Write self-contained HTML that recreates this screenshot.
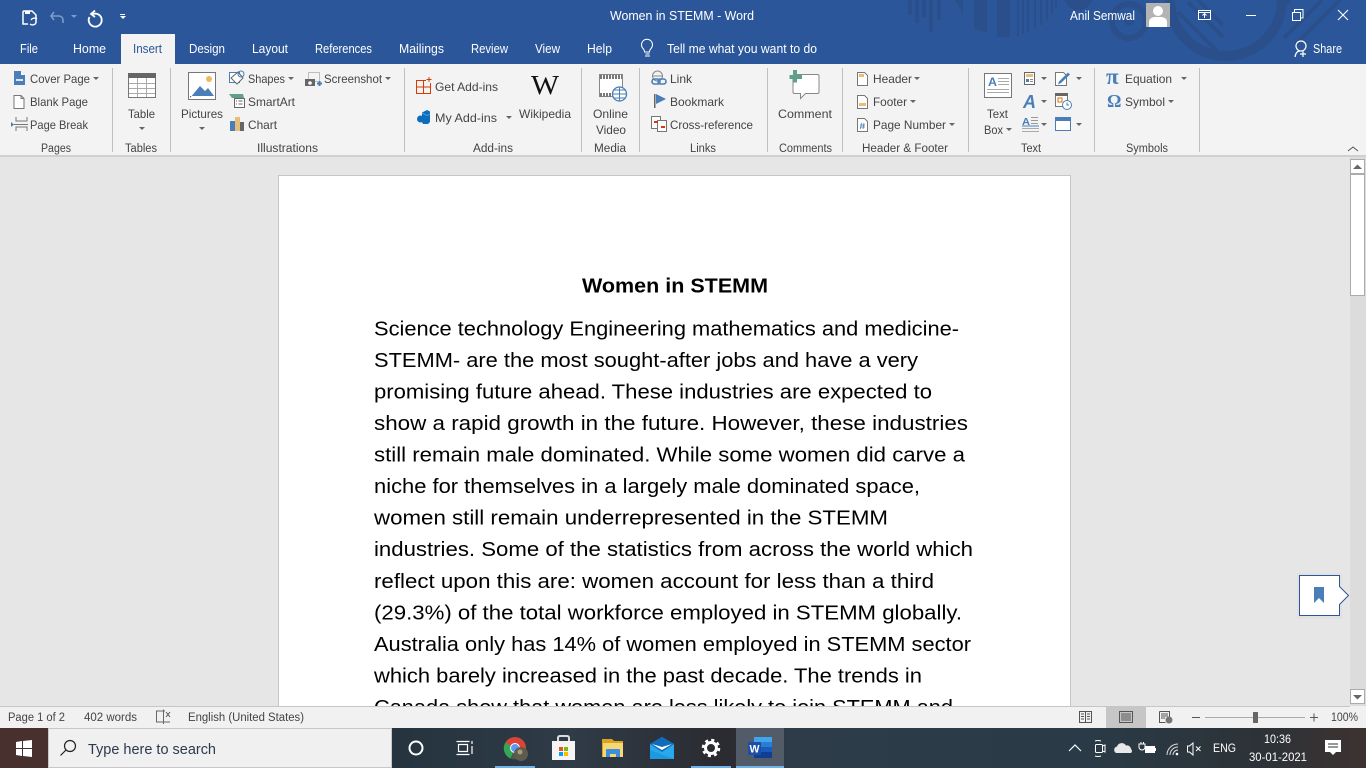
<!DOCTYPE html>
<html><head><meta charset="utf-8"><title>Women in STEMM - Word</title>
<style>
html,body{margin:0;padding:0;width:1366px;height:768px;overflow:hidden;background:#e6e6e6}
svg{display:block;position:absolute;left:0;top:0}
text{font-family:"Liberation Sans",sans-serif;font-size:12px;fill:#444}
.t{fill:#fff;font-size:12.5px}
.g{font-size:11.5px;fill:#444}
.s{font-size:11.5px;fill:#444}
.d{font-size:20px;fill:#000}
.tr{fill:#666}
</style></head><body>
<svg width="1366" height="768" viewBox="0 0 1366 768" xmlns="http://www.w3.org/2000/svg">
<defs><linearGradient id="tb" x1="0" x2="1" y1="0" y2="0">
<stop offset="0" stop-color="#4a2d2c"/><stop offset=".035" stop-color="#452e2e"/><stop offset=".29" stop-color="#25343f"/><stop offset=".42" stop-color="#2f3b47"/><stop offset=".53" stop-color="#2b2b30"/><stop offset=".58" stop-color="#2e3c4a"/><stop offset=".8" stop-color="#2a3a46"/><stop offset=".92" stop-color="#2c3338"/><stop offset="1" stop-color="#3d3230"/></linearGradient></defs>

<!-- title bar -->
<rect width="1366" height="64" fill="#2b579a"/>
<g fill="#2a4f8a">
<rect x="908" y="0" width="4" height="15"/><rect x="915" y="0" width="4" height="23"/><rect x="922" y="0" width="4" height="17"/><rect x="929" y="0" width="4" height="32"/><rect x="937" y="0" width="4" height="20"/>
<path d="M955 0h8v14zM974 0h13v33l-13-5zM997 0h13v37h-13zM1017 0h2v36h-2zM1022 0h2v34h-2zM1027 0h2v32h-2zM1034 0h2v29h-2zM1040 0h2v25h-2zM1046 0h2v20h-2zM1051 0h2v14h-2zM1055 0h2v9h-2z"/>
<path d="M1065 0h27a14 14 0 0 1-27 0z"/>
</g>
<circle cx="1129" cy="21" r="17" fill="none" stroke="#2a4f8a" stroke-width="6"/>
<circle cx="1129" cy="21" r="5" fill="#2a4f8a"/>
<circle cx="1226" cy="0" r="56" fill="none" stroke="#2a4f8a" stroke-width="10"/>
<path d="M1178 12l40 40M1188 2l35 35M1198 0l25 25M1290 0l-8 8M1322 0l-38 38M1340 0l-45 45" stroke="#2a4f8a" stroke-width="4" fill="none"/>

<!-- QAT -->
<g fill="none" stroke="#fff" stroke-width="1.5">
<path d="M23 11h9l4 4v8M23 11v13h5"/><path d="M31 20a4 4 0 0 1 6-1M36 23a4 4 0 0 1-6 1" stroke-width="1.3"/>
</g>
<rect x="25" y="11" width="5" height="3" fill="#fff"/>
<path d="M54 12l-3 4 3 4M51 16h8a4 4 0 0 1 4 4v3" fill="none" stroke="#7f9cc8" stroke-width="1.6"/>
<path d="M71 15h6l-3 3z" fill="#7f9cc8"/>
<path d="M95 10.500l-4 3.500 4 3M91 14h2a6.500 6.500 0 1 1-3.500 3" fill="none" stroke="#fff" stroke-width="1.8"/>
<path d="M120 14h5v1h-5zM120 16h6l-3 3z" fill="#fff"/>

<text class="t" x="610" y="20" textLength="144" lengthAdjust="spacingAndGlyphs">Women in STEMM  -  Word</text>
<text class="t" x="1070" y="20" textLength="65" lengthAdjust="spacingAndGlyphs">Anil Semwal</text>
<rect x="1146" y="3" width="24" height="24" fill="#b3b3b3"/>
<circle cx="1158" cy="11" r="5" fill="#fff"/><path d="M1149 27v-5q0-4 5-5h8q5 1 5 5v5z" fill="#fff"/>

<!-- window controls -->
<g fill="none" stroke="#fff" stroke-width="1">
<rect x="1198.500" y="10.500" width="12" height="9"/><path d="M1198 12.500h13M1204.500 18v-4M1202.500 15.500l2-2 2 2"/>
<path d="M1246 15.500h10"/>
<rect x="1292.500" y="12.500" width="8" height="8"/><path d="M1294.500 12v-2.500h8.500v8.500h-2.500"/>
<path d="M1338 10l10 10M1348 10l-10 10" stroke-width="1.1"/>
</g>

<!-- tabs -->
<rect x="121" y="34" width="54" height="31" fill="#f3f3f3"/>
<text class="t" x="20" y="53" textLength="18" lengthAdjust="spacingAndGlyphs">File</text>
<text class="t" x="73" y="53" textLength="33" lengthAdjust="spacingAndGlyphs">Home</text>
<text class="t" x="133" y="53" textLength="29" lengthAdjust="spacingAndGlyphs" style="fill:#2b579a">Insert</text>
<text class="t" x="189" y="53" textLength="36" lengthAdjust="spacingAndGlyphs">Design</text>
<text class="t" x="252" y="53" textLength="36" lengthAdjust="spacingAndGlyphs">Layout</text>
<text class="t" x="315" y="53" textLength="57" lengthAdjust="spacingAndGlyphs">References</text>
<text class="t" x="399" y="53" textLength="45" lengthAdjust="spacingAndGlyphs">Mailings</text>
<text class="t" x="471" y="53" textLength="37" lengthAdjust="spacingAndGlyphs">Review</text>
<text class="t" x="535" y="53" textLength="25" lengthAdjust="spacingAndGlyphs">View</text>
<text class="t" x="587" y="53" textLength="25" lengthAdjust="spacingAndGlyphs">Help</text>
<path d="M645 56h5M645.500 54h4M644.500 52q0-2-1.500-3.500a5.500 5.500 0 1 1 8 0q-1.500 1.500-1.500 3.500z" fill="none" stroke="#fff" stroke-width="1"/>
<text class="t" x="667" y="53" textLength="150" lengthAdjust="spacingAndGlyphs">Tell me what you want to do</text>
<circle cx="1301" cy="46" r="5" fill="none" stroke="#fff" stroke-width="1.2"/>
<path d="M1295 57q1-6 5-6M1303 51v6M1300 54h6" fill="none" stroke="#fff" stroke-width="1.2"/>
<text class="t" x="1313" y="53" textLength="29" lengthAdjust="spacingAndGlyphs">Share</text>

<!-- ribbon -->
<rect y="64" width="1366" height="92" fill="#f3f3f3"/>
<rect y="155" width="1366" height="2" fill="#d0d0d0"/>
<g fill="#c0c0c0">
<rect x="112" y="68" width="1" height="84"/><rect x="170" y="68" width="1" height="84"/><rect x="404" y="68" width="1" height="84"/><rect x="581" y="68" width="1" height="84"/><rect x="639" y="68" width="1" height="84"/><rect x="767" y="68" width="1" height="84"/><rect x="842" y="68" width="1" height="84"/><rect x="968" y="68" width="1" height="84"/><rect x="1094" y="68" width="1" height="84"/><rect x="1199" y="68" width="1" height="84"/>
</g>

<!-- Pages -->
<path d="M14 71h7l4 4v10H14z" fill="#4a7eb8"/><path d="M21 71v4h4z" fill="#fff"/><path d="M16 79h7v2h-7z" fill="#dce6f2"/>
<path d="M14 95.500h7l3 3v10h-10z" fill="#fff" stroke="#777"/><path d="M21 95.500v3h3" fill="none" stroke="#777"/>
<path d="M16 117v4h11v-4M16 131v-4h11v4" fill="none" stroke="#777"/><path d="M11 122v5l3-2.500z" fill="#4a7eb8"/><path d="M14 124.500h14" stroke="#777"/>
<text x="30" y="83" textLength="60" lengthAdjust="spacingAndGlyphs">Cover Page</text>
<path class="tr" d="M93 77h6l-3 3z"/>
<text x="30" y="106" textLength="58" lengthAdjust="spacingAndGlyphs">Blank Page</text>
<text x="30" y="129" textLength="58" lengthAdjust="spacingAndGlyphs">Page Break</text>
<text class="g" x="41" y="152" textLength="30" lengthAdjust="spacingAndGlyphs">Pages</text>

<!-- Tables -->
<rect x="128.500" y="73.500" width="27" height="24" fill="#fff" stroke="#777"/><rect x="128" y="73" width="28" height="5" fill="#666"/>
<path d="M129 83.500h26M129 88.500h26M129 93.500h26M137.500 78v19M146.500 78v19" stroke="#aaa" fill="none"/>
<text x="128" y="118" textLength="27" lengthAdjust="spacingAndGlyphs">Table</text>
<path class="tr" d="M139 127h6l-3 3z"/>
<text class="g" x="125" y="152" textLength="32" lengthAdjust="spacingAndGlyphs">Tables</text>

<!-- Illustrations -->
<rect x="188.500" y="72.500" width="27" height="27" fill="#fff" stroke="#777"/><circle cx="209" cy="79" r="3" fill="#f0b95c"/>
<path d="M190 98l10-12 5 5 3-3 6 8v0h-24z" fill="#4a7eb8"/>
<text x="181" y="118" textLength="42" lengthAdjust="spacingAndGlyphs">Pictures</text>
<path class="tr" d="M199 127h6l-3 3z"/>
<rect x="229.500" y="72.500" width="10" height="10" fill="#fff" stroke="#4a7eb8"/><path d="M238 72l5 6-6 6-6-6z" fill="#fff" stroke="#666"/><circle cx="241" cy="74" r="3" fill="none" stroke="#4a7eb8"/>
<text x="248" y="83" textLength="37" lengthAdjust="spacingAndGlyphs">Shapes</text><path class="tr" d="M288 77h6l-3 3z"/>
<path d="M229 94h14l1 4H232z" fill="#5fa08a"/><rect x="234.500" y="98.500" width="10" height="9" fill="#fff" stroke="#666"/><path d="M236 101h1M238.500 101h4M236 104h1M238.500 104h4" stroke="#666"/>
<text x="248" y="106" textLength="47" lengthAdjust="spacingAndGlyphs">SmartArt</text>
<rect x="230" y="121" width="5" height="10" fill="#4a7eb8"/><rect x="235" y="117" width="5" height="14" fill="#e5bf7a"/><rect x="240" y="122" width="4" height="9" fill="#666"/>
<text x="248" y="129" textLength="29" lengthAdjust="spacingAndGlyphs">Chart</text>
<rect x="308.500" y="72.500" width="11" height="9" fill="none" stroke="#888" stroke-dasharray="1 1"/><rect x="305" y="79" width="10" height="7" fill="#666"/><circle cx="310" cy="83" r="1.800" fill="#fff"/><path d="M317 83.500h5M319.500 81v5" stroke="#4a7eb8" stroke-width="2"/>
<text x="324" y="83" textLength="58" lengthAdjust="spacingAndGlyphs">Screenshot</text><path class="tr" d="M385 77h6l-3 3z"/>
<text class="g" x="257" y="152" textLength="61" lengthAdjust="spacingAndGlyphs">Illustrations</text>

<!-- Add-ins -->
<path d="M416.500 80.500h14v13h-14zM416.500 87h14M423.500 80v13" fill="none" stroke="#d83b01" stroke-width="1"/>
<rect x="426" y="76" width="6" height="7" fill="#f3f3f3"/><path d="M426.500 79.500h5M429 77v5" stroke="#d83b01"/>
<text x="435" y="91" textLength="63" lengthAdjust="spacingAndGlyphs">Get Add-ins</text>
<path d="M422 112.500l5-2.500 3 1.500v10.500l-2 2h-5l-1-2v-7z" fill="#0f6cbd"/><circle cx="420.500" cy="119" r="3.500" fill="#0f6cbd"/>
<path d="M422 113l5 2.500 3-1.500" fill="none" stroke="#5aa7e6" stroke-width=".7"/>
<text x="435" y="122" textLength="62" lengthAdjust="spacingAndGlyphs">My Add-ins</text>
<path class="tr" d="M506 116h6l-3 3z"/>
<text x="531" y="94" textLength="28" lengthAdjust="spacingAndGlyphs" style="font-family:'Liberation Serif',serif;font-size:27px;fill:#111">W</text>
<text x="519" y="118" textLength="52" lengthAdjust="spacingAndGlyphs">Wikipedia</text>
<text class="g" x="473" y="152" textLength="40" lengthAdjust="spacingAndGlyphs">Add-ins</text>

<!-- Media -->
<rect x="599.500" y="74.500" width="23" height="22" fill="#fff" stroke="#888"/>
<path d="M600 77h22M600 95h14" stroke="#777" stroke-width="4" stroke-dasharray="2 1"/>
<circle cx="619.500" cy="94" r="7" fill="#fff" stroke="#4a7eb8" stroke-width="1.300"/><path d="M612.500 94h14M619.500 87v14M614 90h11M614 98h11" stroke="#4a7eb8" fill="none"/>
<text x="593" y="118" textLength="35" lengthAdjust="spacingAndGlyphs">Online</text>
<text x="596" y="134" textLength="30" lengthAdjust="spacingAndGlyphs">Video</text>
<text class="g" x="594" y="152" textLength="32" lengthAdjust="spacingAndGlyphs">Media</text>

<!-- Links -->
<circle cx="657.500" cy="76" r="5" fill="none" stroke="#888"/><path d="M652 76h11" stroke="#888"/>
<rect x="652" y="79" width="8" height="5" rx="2.500" fill="none" stroke="#4a7eb8" stroke-width="1.600"/><rect x="658" y="79" width="8" height="5" rx="2.500" fill="none" stroke="#4a7eb8" stroke-width="1.600"/>
<text x="670" y="83" textLength="22" lengthAdjust="spacingAndGlyphs">Link</text>
<rect x="654" y="94" width="1.500" height="14" fill="#666"/><path d="M656 94l10 5-10 5z" fill="#4a7eb8"/>
<text x="670" y="106" textLength="54" lengthAdjust="spacingAndGlyphs">Bookmark</text>
<rect x="651.500" y="116.500" width="9" height="12" fill="#fff" stroke="#777"/><rect x="657.500" y="120.500" width="9" height="11" fill="#fff" stroke="#777"/><path d="M654 122h4M661 127h4" stroke="#d83b01" stroke-width="2"/>
<text x="670" y="129" textLength="83" lengthAdjust="spacingAndGlyphs">Cross-reference</text>
<text class="g" x="690" y="152" textLength="26" lengthAdjust="spacingAndGlyphs">Links</text>

<!-- Comments -->
<path d="M793.500 74.500h24a1.500 1.500 0 0 1 1.500 1.500v16a1.500 1.500 0 0 1-1.500 1.500h-12l-5 5v-5h-6a1.500 1.500 0 0 1-1.500-1.500v-16z" fill="#fff" stroke="#888"/>
<path d="M792 70h4v5h5v4h-5v3.500h-4V79h-3.500v-4H792z" fill="#5fa08a" transform="translate(1 0)"/>
<text x="778" y="118" textLength="54" lengthAdjust="spacingAndGlyphs">Comment</text>
<text class="g" x="779" y="152" textLength="53" lengthAdjust="spacingAndGlyphs">Comments</text>

<!-- Header & Footer -->
<path d="M857.500 72.500h7l3 3v10h-10z" fill="#fff" stroke="#777"/><rect x="859" y="74" width="5" height="3" fill="#e5bf7a"/>
<text x="873" y="83" textLength="39" lengthAdjust="spacingAndGlyphs">Header</text><path class="tr" d="M914 77h6l-3 3z"/>
<path d="M857.500 95.500h7l3 3v10h-10z" fill="#fff" stroke="#777"/><rect x="859" y="103" width="7" height="3" fill="#e5bf7a"/>
<text x="873" y="106" textLength="34" lengthAdjust="spacingAndGlyphs">Footer</text><path class="tr" d="M910 100h6l-3 3z"/>
<path d="M857.500 118.500h7l3 3v10h-10z" fill="#fff" stroke="#777"/>
<path d="M860 125h5M860 127h5M861.500 123l-1 6M864 123l-1 6" stroke="#4a7eb8" stroke-width=".8" fill="none"/>
<text x="873" y="129" textLength="73" lengthAdjust="spacingAndGlyphs">Page Number</text><path class="tr" d="M949 123h6l-3 3z"/>
<text class="g" x="862" y="152" textLength="86" lengthAdjust="spacingAndGlyphs">Header &amp; Footer</text>

<!-- Text -->
<rect x="984.500" y="73.500" width="27" height="24" fill="#fff" stroke="#777"/>
<text x="988" y="86" textLength="9" lengthAdjust="spacingAndGlyphs" style="font-size:12px;font-weight:bold;fill:#4a7eb8">A</text>
<path d="M998 78.500h11M998 81.500h11M998 84.500h11M987 89.500h22M987 92.500h22" stroke="#aaa" fill="none"/>
<text x="987" y="118" textLength="21" lengthAdjust="spacingAndGlyphs">Text</text>
<text x="984" y="134" textLength="19" lengthAdjust="spacingAndGlyphs">Box</text><path class="tr" d="M1006 128h6l-3 3z"/>
<rect x="1024.500" y="72.500" width="10" height="12" fill="#fff" stroke="#666"/><rect x="1026" y="74" width="7" height="3" fill="#e5bf7a"/><path d="M1026 79h3v3h-3z" fill="#4a7eb8"/><path d="M1030 79.500h3M1030 81.500h3" stroke="#888"/>
<path class="tr" d="M1041 77h6l-3 3z"/>
<path d="M1055.500 72.500h8l3 3v10h-11z" fill="#fff" stroke="#777"/><path d="M1061 83l-3 1.500 1-3 9-9 2 2z" fill="#4a7eb8"/>
<path class="tr" d="M1076 77h6l-3 3z"/>
<text x="1023" y="108" textLength="13" lengthAdjust="spacingAndGlyphs" style="font-size:18px;font-weight:bold;font-style:italic;fill:#4a7eb8">A</text>
<path class="tr" d="M1041 100h6l-3 3z"/>
<rect x="1055.500" y="94.500" width="12" height="12" fill="#fff" stroke="#777"/><rect x="1055" y="93" width="13" height="3" fill="#666"/><rect x="1058" y="98" width="4" height="4" fill="none" stroke="#d9730d"/>
<circle cx="1067" cy="105" r="4.500" fill="#fff" stroke="#4a7eb8"/><path d="M1067 102.500v2.500h2" stroke="#4a7eb8" fill="none"/>
<text x="1022" y="125" textLength="8" lengthAdjust="spacingAndGlyphs" style="font-size:10.500px;font-weight:bold;fill:#4a7eb8">A</text>
<path d="M1031 117.500h7M1031 120.500h7M1031 123.500h7" stroke="#999" fill="none"/><path d="M1022 126h17" stroke="#4a7eb8"/><path d="M1022 128.500h17M1022 131.500h17" stroke="#aaa"/>
<path class="tr" d="M1041 123h6l-3 3z"/>
<rect x="1055.500" y="117.500" width="15" height="13" fill="#fff" stroke="#4a7eb8"/><rect x="1055" y="117" width="16" height="4" fill="#4a7eb8"/>
<path class="tr" d="M1076 123h6l-3 3z"/>
<text class="g" x="1021" y="152" textLength="20" lengthAdjust="spacingAndGlyphs">Text</text>

<!-- Symbols -->
<text x="1106" y="84" style="font-family:'Liberation Serif',serif;font-size:23px;font-weight:bold;fill:#4a7eb8">π</text>
<text x="1125" y="83" textLength="47" lengthAdjust="spacingAndGlyphs">Equation</text><path class="tr" d="M1181 77h6l-3 3z"/>
<text x="1107" y="107" style="font-family:'Liberation Serif',serif;font-size:18px;font-weight:bold;fill:#4a7eb8">Ω</text>
<text x="1125" y="106" textLength="40" lengthAdjust="spacingAndGlyphs">Symbol</text><path class="tr" d="M1168 100h6l-3 3z"/>
<text class="g" x="1126" y="152" textLength="42" lengthAdjust="spacingAndGlyphs">Symbols</text>
<path d="M1348 151l5-4 5 4" fill="none" stroke="#555"/>

<!-- document area -->
<rect x="0" y="157" width="1350" height="550" fill="#e6e6e6"/>
<rect x="278.500" y="175.500" width="792" height="540" fill="#fff" stroke="#c6c6c6"/>
<text x="582" y="292.500" textLength="186" lengthAdjust="spacingAndGlyphs" style="font-size:20px;font-weight:bold;fill:#000">Women in STEMM</text>
<text class="d" x="374" y="335.500" textLength="585" lengthAdjust="spacingAndGlyphs">Science technology Engineering mathematics and medicine-</text>
<text class="d" x="374" y="367" textLength="544" lengthAdjust="spacingAndGlyphs">STEMM- are the most sought-after jobs and have a very</text>
<text class="d" x="374" y="398.500" textLength="558" lengthAdjust="spacingAndGlyphs">promising future ahead. These industries are expected to</text>
<text class="d" x="374" y="430" textLength="594" lengthAdjust="spacingAndGlyphs">show a rapid growth in the future. However, these industries</text>
<text class="d" x="374" y="461.500" textLength="591" lengthAdjust="spacingAndGlyphs">still remain male dominated. While some women did carve a</text>
<text class="d" x="374" y="493" textLength="546" lengthAdjust="spacingAndGlyphs">niche for themselves in a largely male dominated space,</text>
<text class="d" x="374" y="524.500" textLength="514" lengthAdjust="spacingAndGlyphs">women still remain underrepresented in the STEMM</text>
<text class="d" x="374" y="556" textLength="599" lengthAdjust="spacingAndGlyphs">industries. Some of the statistics from across the world which</text>
<text class="d" x="374" y="588" textLength="560" lengthAdjust="spacingAndGlyphs">reflect upon this are: women account for less than a third</text>
<text class="d" x="374" y="619.500" textLength="588" lengthAdjust="spacingAndGlyphs">(29.3%) of the total workforce employed in STEMM globally.</text>
<text class="d" x="374" y="651" textLength="597" lengthAdjust="spacingAndGlyphs">Australia only has 14% of women employed in STEMM sector</text>
<text class="d" x="374" y="682.500" textLength="548" lengthAdjust="spacingAndGlyphs">which barely increased in the past decade. The trends in</text>
<text class="d" x="374" y="714" textLength="579" lengthAdjust="spacingAndGlyphs">Canada show that women are less likely to join STEMM and</text>

<!-- scrollbar -->
<rect x="1350" y="157" width="16" height="550" fill="#dcdcdc"/>
<rect x="1350.500" y="159.500" width="14" height="14" fill="#fff" stroke="#ababab"/><path d="M1353 169h9l-4.500-4.500z" fill="#666"/>
<rect x="1350.500" y="174.500" width="14" height="121" fill="#fff" stroke="#ababab"/>
<rect x="1350.500" y="689.500" width="14" height="14" fill="#fff" stroke="#ababab"/><path d="M1353 695h9l-4.500 4.500z" fill="#666"/>

<!-- bookmark callout -->
<rect x="1297" y="573" width="45" height="46" fill="#dedede" opacity=".6"/>
<path d="M1299.500 575.500h40v11l9 9-9 9v11h-40z" fill="#fff" stroke="#2b579a"/>
<path d="M1314 587h10v16l-5-5-5 5z" fill="#4a7eb8"/>

<!-- status bar -->
<rect y="706" width="1366" height="22" fill="#f1f1f1"/><rect y="706" width="1350" height="1" fill="#c6c6c6"/>
<text class="s" x="8" y="721" textLength="57" lengthAdjust="spacingAndGlyphs">Page 1 of 2</text>
<text class="s" x="84" y="721" textLength="53" lengthAdjust="spacingAndGlyphs">402 words</text>
<path d="M163 711h-6.500v11h6.500M163.500 709.500v14.500M164 711h1M164 722h6" fill="none" stroke="#666"/><path d="M166 712l4 5M170 712l-4 5" stroke="#555"/>
<text class="s" x="188" y="721" textLength="116" lengthAdjust="spacingAndGlyphs">English (United States)</text>
<rect x="1106" y="707" width="40" height="21" fill="#c6c6c6"/>
<path d="M1079.500 711.500h5.500l.5 .5.5-.5h5.500v11h-12zM1085.500 712v10M1081 714h3M1081 716.500h3M1081 719h3M1087 714h3M1087 716.500h3M1087 719h3" fill="none" stroke="#555"/>
<rect x="1119.500" y="711.500" width="13" height="11" fill="none" stroke="#555"/><path d="M1121 714h10M1121 716h10M1121 718h10M1121 720h10" stroke="#555"/>
<path d="M1159.500 711.500h10v7M1159.500 711.500v11h6M1161 714h7M1161 716h7M1161 718h4" fill="none" stroke="#555"/><circle cx="1169" cy="720" r="3.500" fill="#777"/>
<rect x="1192" y="717" width="8" height="1" fill="#555"/>
<rect x="1205" y="717" width="100" height="1" fill="#aaa"/><rect x="1253" y="712" width="5" height="11" fill="#666"/>
<path d="M1310 717.500h8M1314 713.500v8" stroke="#555" fill="none"/>
<text class="s" x="1331" y="721" textLength="27" lengthAdjust="spacingAndGlyphs">100%</text>

<!-- taskbar -->
<rect y="728" width="1366" height="40" fill="url(#tb)"/>
<rect x="0" y="728" width="48" height="40" fill="#47302e"/>
<path d="M16 742l6-1v7h-6zM23 741l9-1v8h-9zM16 749h6v7l-6-1zM23 749h9v8l-9-1z" fill="#fff"/>
<rect x="48.500" y="728.500" width="343" height="39" fill="#f0f0f0" stroke="#c8c8c8"/>
<circle cx="70" cy="746" r="5.500" fill="none" stroke="#222" stroke-width="1.200"/><path d="M66 750l-5.500 5.500" stroke="#222" stroke-width="1.200"/>
<text x="88" y="754" textLength="128" lengthAdjust="spacingAndGlyphs" style="font-size:14.500px;fill:#2c3a4e">Type here to search</text>
<circle cx="416" cy="748" r="6.500" fill="none" stroke="#fff" stroke-width="2"/>
<path d="M456.500 741.500h13M458.500 744.500h9v7h-9zM456.500 754.500h13M472 741v3M472 746v8" fill="none" stroke="#fff" stroke-width="1.200"/>
<!-- Chrome -->
<circle cx="515" cy="748" r="11" fill="#db4437"/>
<path d="M515 748l-9.500-5.500a11 11 0 0 0 5 16z" fill="#31a853"/><path d="M515 748l-4.500 10.500a11 11 0 0 0 14-5z" fill="#4a5a50"/>
<circle cx="515" cy="748" r="4.500" fill="#5e97f6" stroke="#fff"/>
<circle cx="521" cy="754" r="7" fill="#5e5c4c"/><circle cx="520" cy="752" r="2.500" fill="#a89c7c"/>
<rect x="495" y="766" width="40" height="2" fill="#6fb2e8"/>
<!-- Store -->
<path d="M558 742v-4q0-2 2-2h7q2 0 2 2v4" fill="none" stroke="#ddd" stroke-width="2"/>
<rect x="552" y="741" width="23" height="19" fill="#f4f4f4"/>
<rect x="559" y="747" width="4" height="4" fill="#f25022"/><rect x="564" y="747" width="4" height="4" fill="#7fba00"/><rect x="559" y="752" width="4" height="4" fill="#00a4ef"/><rect x="564" y="752" width="4" height="4" fill="#ffb900"/>
<!-- Explorer -->
<path d="M602 739h10l2 2h9v16h-21z" fill="#d9a520"/><rect x="603" y="743" width="20" height="14" fill="#f7d774"/>
<path d="M606 757v-7a1 1 0 0 1 1-1h12a1 1 0 0 1 1 1v7h-4v-3h-6v3z" fill="#3f8edb"/>
<!-- Mail -->
<path d="M650 744l12-7 12 7v15h-24z" fill="#29a8ea"/><path d="M650 744l12-7 12 7-12 8z" fill="#0f6cbd"/><path d="M652 744l10 6 10-6-10 3z" fill="#fff"/><path d="M650 750l24 9h-24z" fill="#1b9ae0"/>
<!-- Settings -->
<circle cx="711" cy="748" r="5.500" fill="none" stroke="#fff" stroke-width="3"/>
<circle cx="711" cy="748" r="8" fill="none" stroke="#fff" stroke-width="2.500" stroke-dasharray="3.100 3.180"/>
<rect x="691" y="766" width="40" height="2" fill="#6fb2e8"/>
<!-- Word -->
<rect x="736" y="728" width="48" height="40" fill="#515c68"/>
<rect x="736" y="766" width="48" height="2" fill="#6fb2e8"/>
<rect x="754" y="737" width="18" height="21" rx="1" fill="#185abd"/><rect x="754" y="737" width="18" height="5" fill="#41a5ee"/><rect x="754" y="742" width="18" height="5" fill="#2b7cd3"/><rect x="754" y="752" width="18" height="6" fill="#103f91"/>
<rect x="748" y="742" width="13" height="13" rx="1" fill="#1b4fa5"/>
<text x="749.500" y="752.500" textLength="10" lengthAdjust="spacingAndGlyphs" style="font-size:11px;font-weight:bold;fill:#fff">W</text>

<!-- tray -->
<path d="M1069 751l6-6 6 6" fill="none" stroke="#fff" stroke-width="1.200"/>
<rect x="1095.500" y="744.500" width="7" height="8" rx="1" fill="none" stroke="#fff"/><path d="M1102.500 746l2.500-1v7l-2.500-1" fill="none" stroke="#fff"/><path d="M1095 741q3-1 6 0M1095 756q3 1 6 0" stroke="#fff" fill="none"/>
<path d="M1116 753a3.500 3.500 0 0 1 1-6.500 5 5 0 0 1 9-1 4 4 0 0 1 5 3.500 2.500 2.500 0 0 1 0 4z" fill="#e8e8e8"/>
<rect x="1145.500" y="746.500" width="9" height="6" fill="#fff" stroke="#fff"/><rect x="1155" y="748" width="1" height="3" fill="#fff"/><path d="M1139 744h6v3a3 3 0 0 1-6 0zM1141 742v2M1143.500 742v2" fill="none" stroke="#fff"/>
<path d="M1167 755a11 11 0 0 1 11-11M1170 755a8 8 0 0 1 8-8M1173 755a5 5 0 0 1 5-5" fill="none" stroke="#ddd"/><circle cx="1177" cy="754" r="1.300" fill="#fff"/>
<path d="M1187.500 746v6h2l3.500 3v-12l-3.500 3z" fill="none" stroke="#fff"/><path d="M1196 746.500l4.500 4.500M1200.500 746.500l-4.500 4.500" stroke="#fff"/>
<text x="1213" y="752" textLength="23" lengthAdjust="spacingAndGlyphs" style="fill:#fff">ENG</text>
<text x="1264" y="743" textLength="27" lengthAdjust="spacingAndGlyphs" style="fill:#fff">10:36</text>
<text x="1249" y="761" textLength="58" lengthAdjust="spacingAndGlyphs" style="fill:#fff">30-01-2021</text>
<path d="M1325 740h16v12h-5l-3 3-3-3h-5z" fill="#fff"/><path d="M1328 744h10M1328 747h10" stroke="#333"/>
</svg>
</body></html>
